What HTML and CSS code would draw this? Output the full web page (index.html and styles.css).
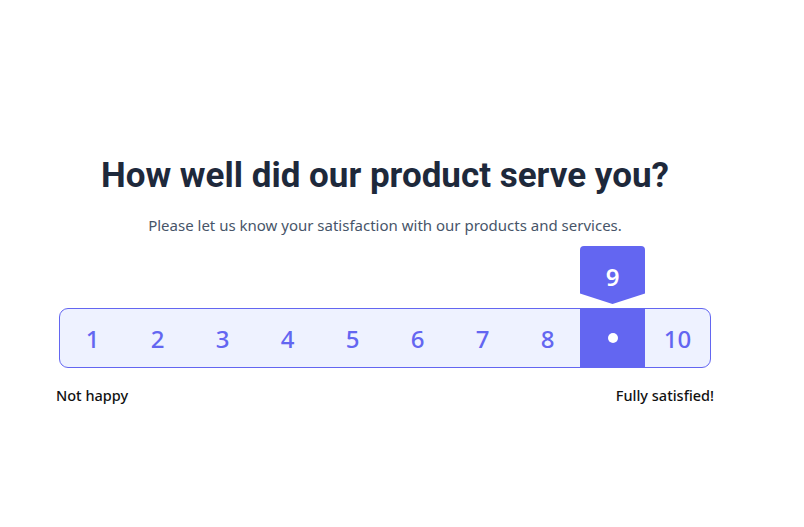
FILE: index.html
```html
<!DOCTYPE html>
<html lang="en">
<head>
<meta charset="utf-8">
<title>Survey</title>
<link rel="stylesheet" href="styles.css">
</head>
<body>
<main class="survey">
  <h1 class="title">How well did our product serve you?</h1>
  <p class="subtitle">Please let us know your satisfaction with our products and services.</p>
  <div class="scale">
    <div class="cell">1</div>
    <div class="cell">2</div>
    <div class="cell">3</div>
    <div class="cell">4</div>
    <div class="cell">5</div>
    <div class="cell">6</div>
    <div class="cell">7</div>
    <div class="cell">8</div>
    <div class="cell selected">
      <span class="dot"></span>
      <div class="tip">9</div>
    </div>
    <div class="cell">10</div>
  </div>
  <div class="labels">
    <span>Not happy</span>
    <span>Fully satisfied!</span>
  </div>
</main>
</body>
</html>
```
FILE: styles.css
```css
html, body {
  margin: 0;
  background: #ffffff;
}
.survey {
  width: 658px;
  margin-left: 56px;
  padding-top: 152px;
  font-family: "Noto Sans", "Open Sans", sans-serif;
}
.title {
  margin: 0;
  text-align: center;
  font-family: Roboto, "Noto Sans", sans-serif;
  font-weight: 700;
  font-size: 35px;
  line-height: 48px;
  color: #1e293b;
}
.subtitle {
  margin: 14px 0 0;
  text-align: center;
  font-size: 15px;
  line-height: 22px;
  color: #475569;
}
.scale {
  display: flex;
  margin: 72px 3px 0;
  height: 58px;
  border: 1px solid #6366f1;
  border-radius: 9px;
  background: #eef2ff;
}
.cell {
  position: relative;
  flex: 1;
  display: flex;
  align-items: center;
  justify-content: center;
  font-size: 24px;
  font-weight: 500;
  color: #6366f1;
}
.cell.selected {
  background: #6366f1;
}
.dot {
  width: 10px;
  height: 10px;
  border-radius: 50%;
  background: #ffffff;
}
.tip {
  position: absolute;
  left: 0;
  right: 0;
  bottom: calc(100% + 5px);
  height: 58px;
  padding-top: 3px;
  box-sizing: border-box;
  display: flex;
  align-items: center;
  justify-content: center;
  background: #6366f1;
  border-radius: 4px;
  clip-path: polygon(0 0, 100% 0, 100% 82%, 50% 100%, 0 82%);
  color: #ffffff;
  font-weight: 600;
  font-size: 24px;
}
.labels {
  display: flex;
  justify-content: space-between;
  margin-top: 17px;
  font-size: 14.5px;
  line-height: 20px;
  font-weight: 500;
  color: #111111;
}
```
